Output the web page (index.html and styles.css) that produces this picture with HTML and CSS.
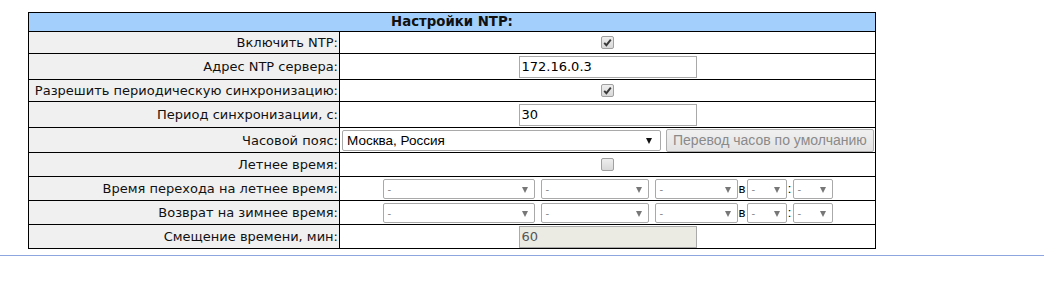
FILE: index.html
```html
<!DOCTYPE html>
<html lang="ru">
<head>
<meta charset="utf-8">
<title>Настройки NTP</title>
<link rel="stylesheet" href="styles.css">
</head>
<body>
<div class="page">
  <table class="ntp">
    <colgroup><col class="c-label"><col class="c-val"></colgroup>
    <tr class="hdr"><th colspan="2">Настройки NTP:</th></tr>
    <tr class="h22">
      <td class="lbl">Включить NTP:</td>
      <td class="val center"><span class="chk on"><svg viewBox="0 0 13 13" width="13" height="13"><path d="M3.2 6.8 L5.4 9.2 L9.8 3.6" fill="none" stroke="#3a3a3a" stroke-width="1.9"/></svg></span></td>
    </tr>
    <tr class="h26">
      <td class="lbl">Адрес NTP сервера:</td>
      <td class="val center"><input class="txt" type="text" value="172.16.0.3"></td>
    </tr>
    <tr class="h22">
      <td class="lbl">Разрешить периодическую синхронизацию:</td>
      <td class="val center"><span class="chk on"><svg viewBox="0 0 13 13" width="13" height="13"><path d="M3.2 6.8 L5.4 9.2 L9.8 3.6" fill="none" stroke="#3a3a3a" stroke-width="1.9"/></svg></span></td>
    </tr>
    <tr class="h26">
      <td class="lbl">Период синхронизации, с:</td>
      <td class="val center"><input class="txt" type="text" value="30"></td>
    </tr>
    <tr class="h25">
      <td class="lbl">Часовой пояс:</td>
      <td class="val">
        <div class="tzrow">
          <span class="sel tz"><span class="stext">Москва, Россия</span><span class="arr dark"></span></span>
          <button class="btn" type="button">Перевод часов по умолчанию</button>
        </div>
      </td>
    </tr>
    <tr class="h24">
      <td class="lbl">Летнее время:</td>
      <td class="val center"><span class="chk"></span></td>
    </tr>
    <tr class="h24">
      <td class="lbl">Время перехода на летнее время:</td>
      <td class="val">
        <div class="dst">
          <span class="sel dim w152"><span class="stext">-</span><span class="arr"></span></span>
          <span class="sel dim w108"><span class="stext">-</span><span class="arr"></span></span>
          <span class="sel dim w83"><span class="stext">-</span><span class="arr"></span></span>
          <span class="sep-v">в</span>
          <span class="sel dim w40"><span class="stext">-</span><span class="arr"></span></span>
          <span class="sep-c">:</span>
          <span class="sel dim w40"><span class="stext">-</span><span class="arr"></span></span>
        </div>
      </td>
    </tr>
    <tr class="h24">
      <td class="lbl">Возврат на зимнее время:</td>
      <td class="val">
        <div class="dst">
          <span class="sel dim w152"><span class="stext">-</span><span class="arr"></span></span>
          <span class="sel dim w108"><span class="stext">-</span><span class="arr"></span></span>
          <span class="sel dim w83"><span class="stext">-</span><span class="arr"></span></span>
          <span class="sep-v">в</span>
          <span class="sel dim w40"><span class="stext">-</span><span class="arr"></span></span>
          <span class="sep-c">:</span>
          <span class="sel dim w40"><span class="stext">-</span><span class="arr"></span></span>
        </div>
      </td>
    </tr>
    <tr class="h24">
      <td class="lbl">Смещение времени, мин:</td>
      <td class="val center"><input class="txt off" type="text" value="60" disabled></td>
    </tr>
  </table>
  <div class="rule"></div>
</div>
</body>
</html>
```

FILE: styles.css
```css
html, body {
  margin: 0;
  padding: 0;
  background: #fff;
}

.page {
  padding-top: 12px;
}

.ntp {
  margin-left: 28px;
  width: 848px;
  border-collapse: collapse;
  table-layout: fixed;
  font-family: "DejaVu Sans", Verdana, sans-serif;
  font-size: 13px;
  color: #111;
}

.c-label { width: 311px; }

.ntp th, .ntp td {
  border: 1px solid #000;
  padding: 0 1px;
}

.hdr th {
  height: 18px;
  background: #a3cffc;
  font-weight: bold;
  font-size: 13.3px;
  color: #111;
  text-align: center;
  padding-left: 0;
  padding-right: 0;
  line-height: 16px;
}

.h22 { height: 22px; }
.h24 { height: 24px; }
.h25 { height: 25px; }
.h26 { height: 26px; }

.lbl {
  background: #f0f0f0;
  text-align: right;
  white-space: nowrap;
  padding-right: 2px;
}

.val {
  background: #fff;
}

.center {
  text-align: center;
  line-height: 0;
}

.chk {
  display: inline-block;
  width: 11px;
  height: 11px;
  border: 1px solid #a0a0a0;
  border-radius: 2px;
  background: linear-gradient(#eee, #d8d8d8);
  vertical-align: middle;
  position: relative;
}

.chk svg {
  position: absolute;
  left: -1px;
  top: -1px;
}

.txt {
  box-sizing: border-box;
  display: inline-block;
  vertical-align: middle;
  width: 178px;
  height: 22px;
  border: 1px solid #a9a9a9;
  padding: 0 2px;
  margin: 0;
  font-family: "DejaVu Sans", Tahoma, sans-serif;
  font-size: 13px;
  line-height: 20px;
  color: #000;
  background: #fff;
  outline: none;
}

.off {
  background: #ebebe4;
  border-color: #aaa;
  color: #555;
}

.tzrow {
  display: flex;
  align-items: center;
  gap: 5px;
}

.sel {
  box-sizing: border-box;
  display: inline-flex;
  align-items: center;
  position: relative;
  height: 20px;
  border: 1px solid #a9a9a9;
  border-radius: 2px;
  background: #fff;
  font-family: "Liberation Sans", Arial, sans-serif;
  font-size: 13.5px;
  padding-left: 4px;
}

.tz {
  width: 320px;
  margin-left: 1px;
  height: 21px;
  color: #000;
}

.arr {
  position: absolute;
  right: 6px;
  top: 7px;
  width: 0;
  height: 0;
  border-left: 3.5px solid transparent;
  border-right: 3.5px solid transparent;
  border-top: 6px solid #777;
}

.arr.dark {
  border-top-color: #111;
  right: 8px;
}

.btn {
  box-sizing: border-box;
  width: 209px;
  height: 23px;
  border: 1px solid #adadad;
  border-radius: 2px;
  background: linear-gradient(#f0f0f0, #e3e3e3);
  font-family: "Liberation Sans", Arial, sans-serif;
  font-size: 14px;
  color: #8a8a8a;
  padding: 0;
}

.dst {
  display: flex;
  align-items: center;
  justify-content: center;
}

.dim {
  color: #888;
  font-size: 11px;
  margin-right: 6px;
}

.w152 { width: 152px; }
.w108 { width: 108px; }
.w83 { width: 83px; margin-right: 0; }
.w40 { width: 40px; margin-right: 0; }

.dim .arr {
  right: 6px;
}

.sep-v, .sep-c {
  font-family: "Liberation Sans", Arial, sans-serif;
  font-size: 13px;
  color: #000;
}

.sep-v { width: 9px; padding-left: 1px; box-sizing: border-box; }
.sep-c { width: 6px; text-align: center; }

.rule {
  margin-top: 6px;
  height: 1px;
  background: #8ea6e0;
}
```
